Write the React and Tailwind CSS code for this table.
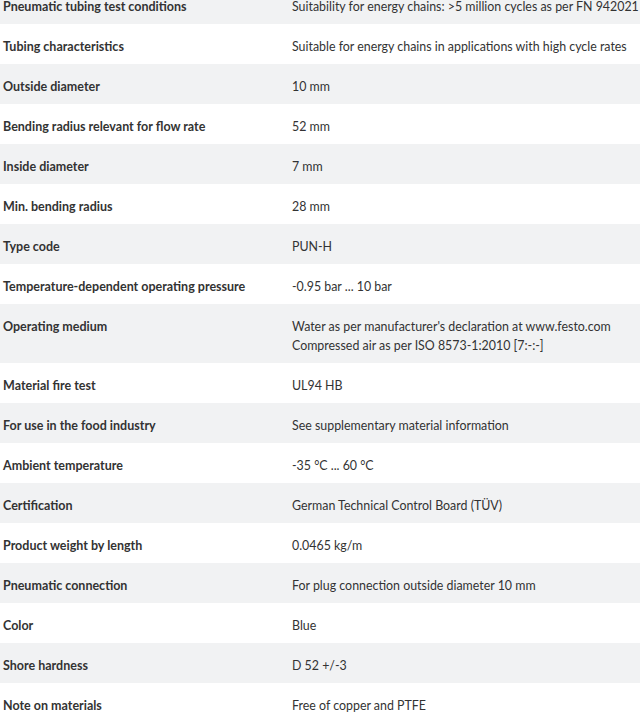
const specs = [
    { label: "Pneumatic tubing test conditions", value: ["Suitability for energy chains: >5 million cycles as per FN 942021"] },
    { label: "Tubing characteristics", value: ["Suitable for energy chains in applications with high cycle rates"] },
    { label: "Outside diameter", value: ["10 mm"] },
    { label: "Bending radius relevant for flow rate", value: ["52 mm"] },
    { label: "Inside diameter", value: ["7 mm"] },
    { label: "Min. bending radius", value: ["28 mm"] },
    { label: "Type code", value: ["PUN-H"] },
    { label: "Temperature-dependent operating pressure", value: ["-0.95 bar ... 10 bar"] },
    { label: "Operating medium", value: ["Water as per manufacturer's declaration at www.festo.com", "Compressed air as per ISO 8573-1:2010 [7:-:-]"] },
    { label: "Material fire test", value: ["UL94 HB"] },
    { label: "For use in the food industry", value: ["See supplementary material information"] },
    { label: "Ambient temperature", value: ["-35 °C ... 60 °C"] },
    { label: "Certification", value: ["German Technical Control Board (TÜV)"] },
    { label: "Product weight by length", value: ["0.0465 kg/m"] },
    { label: "Pneumatic connection", value: ["For plug connection outside diameter 10 mm"] },
    { label: "Color", value: ["Blue"] },
    { label: "Shore hardness", value: ["D 52 +/-3"] },
    { label: "Note on materials", value: ["Free of copper and PTFE"] },
];

export default function App() {
    return (
        <div className="w-[640px] h-[713px] overflow-hidden bg-white text-[#333333] font-['Lato',sans-serif] leading-[19px]">
            {/* Spec table, scrolled a bit */}
            <div className="-mt-[16px]">
                {specs.map((row, i) => (
                    <div
                        key={row.label}
                        className={(i % 2 === 0 ? "bg-[#f1f2f3]" : "bg-white") + " flex pt-[13px] pb-[8px]"}>
                        <div className="w-[292px] shrink-0 pl-[3px] font-bold text-[12.5px]">{row.label}</div>
                        <div className="whitespace-nowrap text-[12.4px]">
                            {row.value.map((line) => (
                                <div key={line}>{line}</div>
                            ))}
                        </div>
                    </div>
                ))}
            </div>
        </div>
    );
}
